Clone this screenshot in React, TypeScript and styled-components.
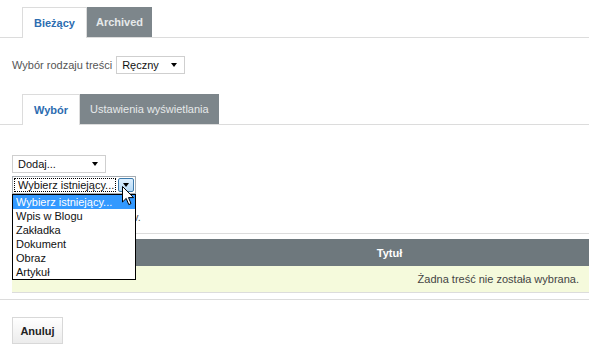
import React from 'react';
import styled, { createGlobalStyle } from 'styled-components';

const GlobalStyle = createGlobalStyle`
  html, body {
    margin: 0;
    padding: 0;
    background: #fff;
  }
  body {
    font-family: 'Liberation Sans', Arial, sans-serif;
    font-size: 11px;
    color: #333;
  }
`;

const Page = styled.div`
  width: 589px;
  height: 362px;
  padding-top: 7px;
  box-sizing: border-box;
  position: relative;
  overflow: hidden;
`;

const TabBar = styled.div`
  display: flex;
  align-items: flex-start;
  height: 30px;
  padding-left: 22px;
  border-bottom: 1px solid #dcdcdc;
`;

const Tab = styled.div<{ $active?: boolean; $bold?: boolean; $pad: number }>`
  height: ${({ $active }) => ($active ? 31 : 30)}px;
  box-sizing: border-box;
  display: flex;
  align-items: center;
  padding: 0 ${({ $pad }) => $pad}px;
  font-weight: ${({ $active, $bold }) => ($active || $bold ? 'bold' : 'normal')};
  background: ${({ $active }) => ($active ? '#fff' : '#7d868b')};
  color: ${({ $active }) => ($active ? '#2c6cb0' : '#e6e9ea')};
  border: ${({ $active }) => ($active ? '1px solid #dcdcdc' : 'none')};
  border-bottom: none;
  margin-bottom: ${({ $active }) => ($active ? -1 : 0)}px;
  position: relative;
  z-index: 1;
`;

const FieldRow = styled.div`
  display: flex;
  align-items: center;
  gap: 4px;
  padding-left: 12px;
  margin-top: 18px;
  color: #555;
`;

const Select = styled.div<{ $width: number }>`
  width: ${({ $width }) => $width}px;
  height: 18px;
  box-sizing: border-box;
  border: 1px solid #cfcfcf;
  background: #fff;
  display: flex;
  align-items: center;
  justify-content: space-between;
  padding: 0 7px 0 5px;
  color: #111;
  position: relative;
`;

const Caret = styled.span`
  width: 0;
  height: 0;
  border-left: 3.5px solid transparent;
  border-right: 3.5px solid transparent;
  border-top: 4px solid #000;
`;

const SubTabs = styled(TabBar)`
  margin-top: 20px;
`;

const Form = styled.div`
  padding: 30px 0 0 12px;
  display: flex;
  flex-direction: column;
  gap: 3px;
`;

const OpenSelect = styled.div`
  width: 124px;
  height: 18px;
  box-sizing: border-box;
  border: 1px solid #a5acb2;
  background: #fff;
  display: flex;
  align-items: stretch;
  padding: 1px;
  position: relative;
`;

const FocusText = styled.div`
  flex: 1;
  border: 1px dotted #000;
  display: flex;
  align-items: center;
  padding-left: 3px;
  color: #111;
  margin-right: 2px;
`;

const ArrowButton = styled.div`
  width: 14px;
  border: 1px solid #3d7bad;
  border-radius: 2px;
  background: linear-gradient(#dcefff, #b7daf6);
  display: flex;
  align-items: center;
  justify-content: center;
`;

const OptionList = styled.ul`
  position: absolute;
  left: -1px;
  top: 17px;
  width: 124px;
  box-sizing: border-box;
  margin: 0;
  padding: 0;
  list-style: none;
  border: 1px solid #000;
  background: #fff;
  z-index: 5;
`;

const Option = styled.li<{ $selected?: boolean }>`
  height: 14px;
  line-height: 14px;
  padding-left: 3px;
  background: ${({ $selected }) => ($selected ? '#3399ff' : '#fff')};
  color: ${({ $selected }) => ($selected ? '#fff' : '#111')};
`;

const Cursor = styled.svg`
  position: absolute;
  left: 109px;
  top: 9px;
  z-index: 6;
`;

const Help = styled.p`
  margin: 16px 0 0 12px;
  line-height: 14px;
  color: #555;
`;

const TableBox = styled.div`
  margin: 9px 0 0 12px;
  border-top: 1px solid #dcdcdc;
  padding-top: 5px;
  width: 577px;
`;

const HeaderRow = styled.div`
  display: grid;
  grid-template-columns: 178px 1fr;
  height: 27px;
  align-items: center;
  background: #6e787d;
  color: #fff;
  font-weight: bold;
`;

const HeaderCell = styled.div`
  text-align: center;
`;

const EmptyRow = styled.div`
  height: 26px;
  background: #f5fadc;
  border-bottom: 1px solid #dcdcdc;
  display: flex;
  align-items: center;
  justify-content: flex-end;
  padding-right: 10px;
  color: #444;
`;

const Divider = styled.div`
  border-top: 1px solid #dcdcdc;
  margin-top: 6px;
`;

const Actions = styled.div`
  padding: 17px 0 0 12px;
`;

const Button = styled.button`
  width: 51px;
  height: 27px;
  border: 1px solid #d8d8d8;
  background: linear-gradient(#ffffff, #ececec);
  font-family: 'Liberation Sans', Arial, sans-serif;
  font-size: 11px;
  font-weight: bold;
  color: #222;
  padding: 0;
`;

const options = ['Wybierz istniejący...', 'Wpis w Blogu', 'Zakładka', 'Dokument', 'Obraz', 'Artykuł'];

export default function App() {
  return (
    <>
      <GlobalStyle />
      <Page>
        <TabBar>
          <Tab $active $pad={11}>Bieżący</Tab>
          <Tab $bold $pad={9}>Archived</Tab>
        </TabBar>

        <FieldRow>
          Wybór rodzaju treści
          <Select $width={69}>
            Ręczny
            <Caret />
          </Select>
        </FieldRow>

        <SubTabs>
          <Tab $active $pad={11}>Wybór</Tab>
          <Tab $pad={10}>Ustawienia wyświetlania</Tab>
        </SubTabs>

        <Form>
          <Select $width={94}>
            Dodaj...
            <Caret />
          </Select>
          <OpenSelect>
            <FocusText>Wybierz istniejący...</FocusText>
            <ArrowButton>
              <Caret />
            </ArrowButton>
            <OptionList>
              {options.map((o, i) => (
                <Option key={o} $selected={i === 0}>
                  {o}
                </Option>
              ))}
            </OptionList>
            <Cursor width="13" height="20" viewBox="0 0 13 20">
              <path
                d="M0.5 0.5 L0.5 16 L4.2 12.4 L6.8 18.6 L9 17.6 L6.5 11.6 L11.5 11.6 Z"
                fill="#fff"
                stroke="#000"
                strokeWidth="1"
                strokeLinejoin="miter"
              />
            </Cursor>
          </OpenSelect>
        </Form>

        <Help>Brak wybranych pozycji tv.</Help>

        <TableBox>
          <HeaderRow>
            <HeaderCell />
            <HeaderCell>Tytuł</HeaderCell>
          </HeaderRow>
          <EmptyRow>Żadna treść nie została wybrana.</EmptyRow>
        </TableBox>

        <Divider />

        <Actions>
          <Button>Anuluj</Button>
        </Actions>
      </Page>
    </>
  );
}
